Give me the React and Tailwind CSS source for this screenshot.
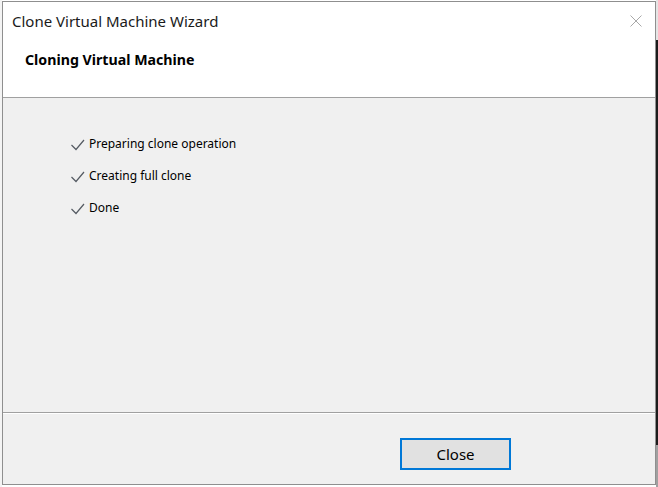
export default function App() {
  const steps = [
    "Preparing clone operation",
    "Creating full clone",
    "Done",
  ];

  return (
    <div
      className="w-[658px] h-[487px] bg-white flex overflow-hidden"
      style={{ fontFamily: '"Noto Sans", "Open Sans", sans-serif' }}
    >
      {/* left strip */}
      <div className="w-[2px] h-full bg-[#f4f4f4]"></div>

      {/* WINDOW */}
      <div className="mt-[1px] w-[654px] h-[484px] border border-[#8f8f8f] flex flex-col bg-white">
        {/* TITLE BAR */}
        <div className="h-[38px] flex items-center justify-between pl-[9px] pr-[12px]">
          <span className="text-[15px] text-[#1a1a1a]">
            Clone Virtual Machine Wizard
          </span>
          <svg width="12" height="12" viewBox="0 0 12 12" className="mr-[1px]">
            <path d="M0.5 0.5 L11.5 11.5 M11.5 0.5 L0.5 11.5" stroke="#a8a8a8" strokeWidth="1" />
          </svg>
        </div>

        {/* HEADER */}
        <div className="h-[57px] pl-[22px] pt-[9px]">
          <h1 className="text-[14.2px] leading-[22px] font-bold text-black">
            Cloning Virtual Machine
          </h1>
        </div>

        <div className="h-[1px] bg-[#a0a0a0]"></div>

        {/* BODY */}
        <div className="flex-1 bg-[#f0f0f0] pl-[67px] pt-[36px] flex flex-col gap-[12px]">
          {steps.map((step, index) => (
            <div key={index} className="flex items-center h-[20px] gap-[4px]">
              <svg width="15" height="13" viewBox="0 0 15 13">
                <path d="M1.5 7 L6 11.5 L14 2" fill="none" stroke="#555b63" strokeWidth="1.2" />
              </svg>
              <span className="text-[12px] text-black">{step}</span>
            </div>
          ))}
        </div>

        <div className="h-[1px] bg-[#a0a0a0]"></div>
        <div className="h-[1px] bg-white"></div>

        {/* FOOTER */}
        <div className="h-[70px] bg-[#f0f0f0] flex items-start pl-[397px] pt-[24px]">
          <button className="w-[111px] h-[32px] border-2 border-[#0078d7] bg-[#e1e1e1] text-[15px] text-black">
            Close
          </button>
        </div>
      </div>

      {/* right strip */}
      <div className="w-[2px] h-full flex flex-col">
        <div className="h-[40px] bg-[#e5e5e5]"></div>
        <div className="h-[405px] bg-[#1c1c1c]"></div>
        <div className="flex-1 bg-[#a0a0a0]"></div>
      </div>
    </div>
  );
}
